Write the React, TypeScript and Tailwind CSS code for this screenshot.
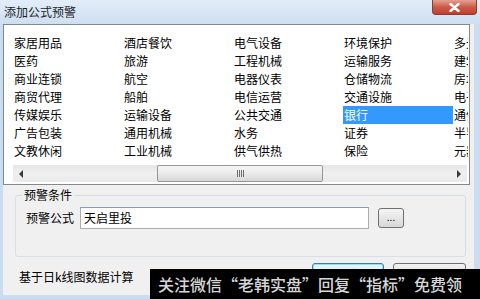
const rows: string[][] = [
  ["家居用品", "酒店餐饮", "电气设备", "环境保护", "多元金融"],
  ["医药", "旅游", "工程机械", "运输服务", "建筑"],
  ["商业连锁", "航空", "电器仪表", "仓储物流", "房地产"],
  ["商贸代理", "船舶", "电信运营", "交通设施", "电子"],
  ["传媒娱乐", "运输设备", "公共交通", "银行", "通信"],
  ["广告包装", "通用机械", "水务", "证券", "半导体"],
  ["文教休闲", "工业机械", "供气供热", "保险", "元器件"],
];

const font = { fontFamily: '"Noto Sans CJK SC", "Microsoft YaHei", sans-serif' };

function Arrow({ dir }: { dir: "left" | "right" }) {
  return (
    <div className="w-[17px] h-full flex items-center justify-center">
      <svg width="5" height="8" viewBox="0 0 5 8">
        {dir === "left" ? <path d="M4 0 L0 4 L4 8 Z" fill="#3a3a3a" /> : <path d="M1 0 L5 4 L1 8 Z" fill="#3a3a3a" />}
      </svg>
    </div>
  );
}

export default function App() {
  return (
    <div
      className="relative w-[480px] h-[299px] overflow-hidden bg-[#c9dcf0] text-[12px] leading-[18px] text-black"
      style={font}
    >
      {/* Title bar */}
      <div className="h-[24px] flex justify-between bg-gradient-to-b from-[#e2edf8] to-[#cddff1]">
        <span className="pl-[4px] pt-[3px] text-[12px] leading-[18px] text-[#1e1e1e]">添加公式预警</span>
        <div className="mr-[3px] w-[45px] h-[15px] rounded-b-[4px] border border-t-0 border-[#8a3b33] bg-gradient-to-b from-[#e4a092] via-[#cc5a48] to-[#c23e2c] flex items-center justify-center">
          <svg width="11" height="9" viewBox="0 0 11 9">
            <path d="M1.5 1 L9.5 8 M9.5 1 L1.5 8" stroke="#ffffff" strokeWidth="2.4" strokeLinecap="round" />
          </svg>
        </div>
      </div>

      {/* Client area */}
      <div className="ml-[3px] w-[471px] h-[271px] bg-[#f0f0f0]">
        {/* List box */}
        <div className="w-[467px] h-[161px] border border-[#828790] bg-white pt-[9px] pl-[9px] overflow-hidden">
          <div className="w-[455px] overflow-hidden">
            <div className="flex flex-col w-[600px]">
              {rows.map((row, i) => (
                <div key={i} className="flex h-[18px]">
                  {row.map((cell, j) => {
                    const sel = i === 4 && j === 3;
                    return (
                      <div
                        key={j}
                        className={
                          sel
                            ? "w-[110px] shrink-0 h-[18px] bg-[#3399ff] text-white pl-[1px]"
                            : "w-[110px] shrink-0 h-[18px] pl-[1px]"
                        }
                      >
                        {cell}
                      </div>
                    );
                  })}
                </div>
              ))}
            </div>
          </div>
          {/* Horizontal scrollbar */}
          <div className="mt-[5px] w-[454px] h-[17px] flex bg-gradient-to-b from-[#e6e6e6] via-[#f0f0f0] to-[#e9e9e9]">
            <Arrow dir="left" />
            <div className="flex-1 flex">
              <div className="ml-[127px] w-[166px] h-[17px] rounded-[2px] border border-[#979797] bg-gradient-to-b from-[#f5f5f5] via-[#ebebeb] to-[#d6d6d6] flex items-center justify-center">
                <div className="flex gap-[1px]">
                  <div className="w-[1px] h-[7px] bg-[#6e6e6e]" />
                  <div className="w-[1px] h-[7px] bg-[#6e6e6e]" />
                  <div className="w-[1px] h-[7px] bg-[#6e6e6e]" />
                  <div className="w-[1px] h-[7px] bg-[#6e6e6e]" />
                </div>
              </div>
            </div>
            <Arrow dir="right" />
          </div>
        </div>

        {/* Group box */}
        <fieldset className="ml-[12px] mt-[2px] w-[451px] h-[70px] border border-[#d5dfe5] rounded-[3px] px-[10px]">
          <legend className="px-[2px] ml-[-4px] leading-[16px]">预警条件</legend>
          <div className="flex items-center mt-[4px]">
            <span className="w-[54px] shrink-0">预警公式</span>
            <div className="w-[289px] h-[22px] border border-[#abadb3] border-t-[#8d9bb0] bg-white pl-[3px] leading-[20px]">
              天启里投
            </div>
            <div className="ml-[9px] w-[26px] h-[20px] rounded-[3px] border border-[#707070] bg-gradient-to-b from-[#f4f4f4] to-[#d8d8d8] flex items-center justify-center text-[10px] leading-[10px] pb-[3px]">
              ...
            </div>
          </div>
        </fieldset>

        {/* Footer */}
        <div className="flex items-start mt-[6px] h-[24px]">
          <span className="ml-[16px] mt-[5px] w-[290px]">基于日k线图数据计算</span>
          <div className="ml-[3px] w-[72px] h-[23px] rounded-[3px] border border-[#3c7fb1] shadow-[inset_0_0_0_1px_#8ee3fb] bg-gradient-to-b from-[#eaf6fd] to-[#bee6fd] flex items-center justify-center">
            确定
          </div>
          <div className="ml-[9px] w-[73px] h-[23px] rounded-[3px] border border-[#707070] bg-gradient-to-b from-[#f2f2f2] to-[#d0d0d0] flex items-center justify-center">
            取消
          </div>
        </div>
      </div>

      {/* Watermark banner */}
      <div className="absolute left-[150px] top-[269px] w-[330px] h-[30px] bg-black pl-[8px] flex items-center text-[16px] leading-[20px] text-[#d6d6d6] font-medium whitespace-nowrap">
        关注微信“老韩实盘”回复“指标”免费领
      </div>
    </div>
  );
}
